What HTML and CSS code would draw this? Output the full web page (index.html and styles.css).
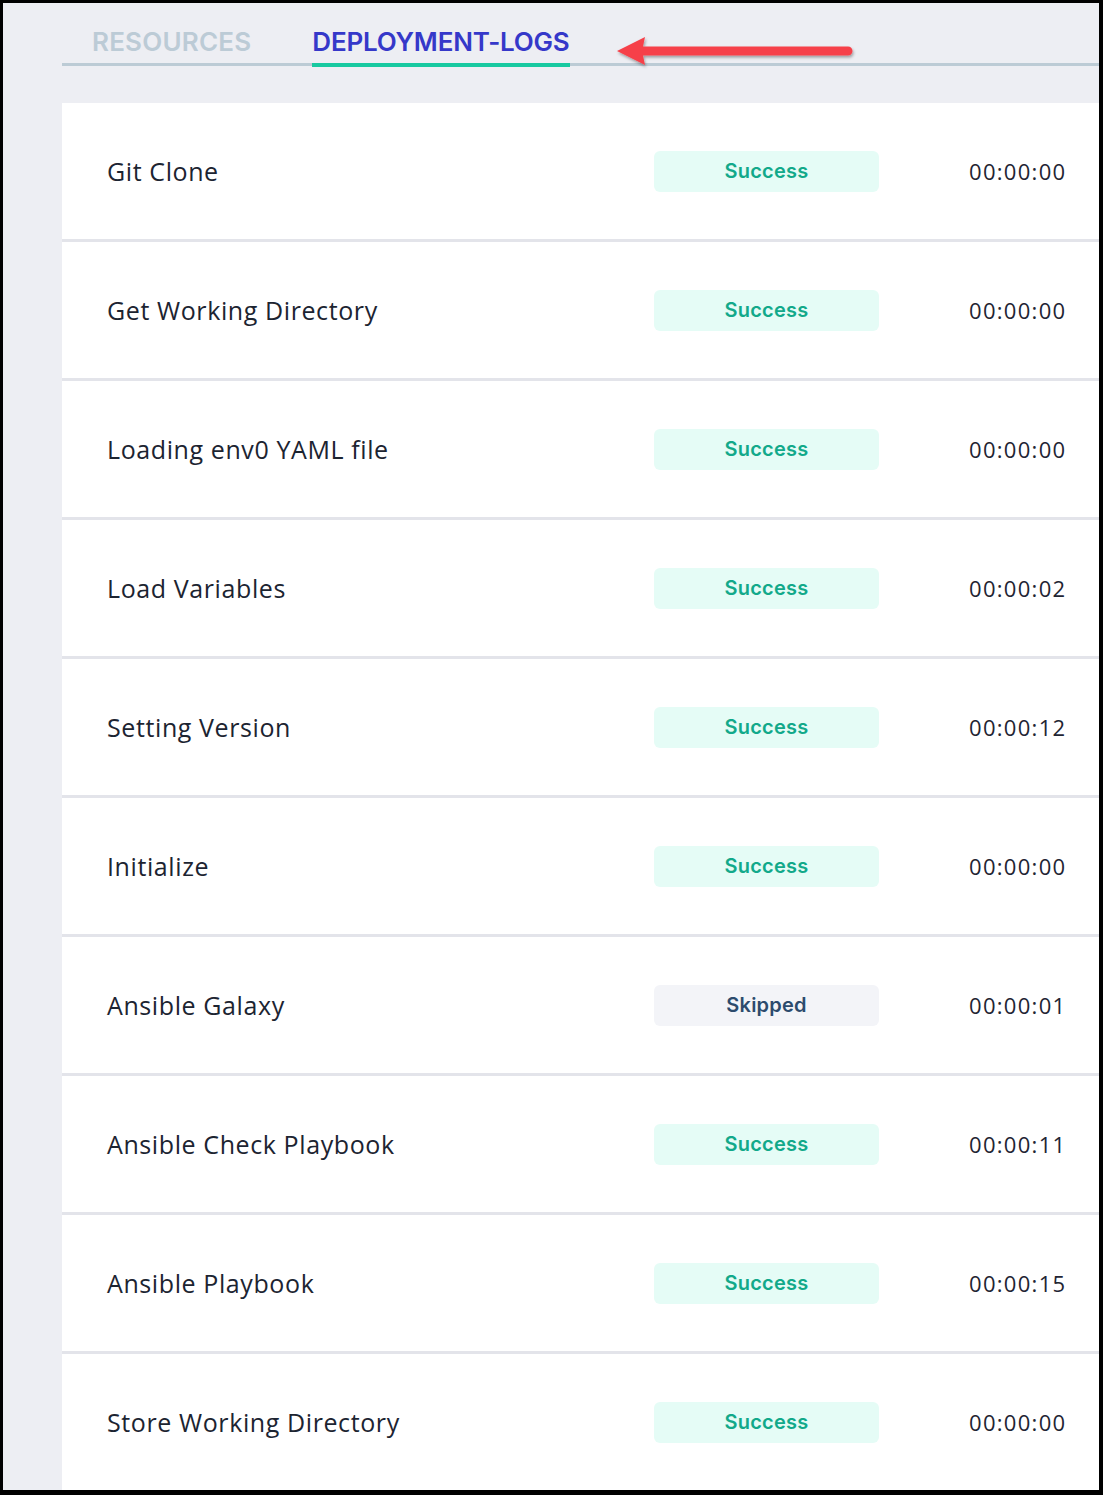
FILE: index.html
```html
<!DOCTYPE html>
<html>
<head>
<meta charset="utf-8">
<link rel="stylesheet" href="styles.css">
</head>
<body>
<div class="frame">
  <div class="tabbar">
    <div class="tab">RESOURCES</div>
    <div class="tab active">DEPLOYMENT-LOGS</div>
    <svg class="arrow" width="250" height="44" viewBox="0 0 250 44">
      <defs>
        <filter id="sh" x="-10%" y="-50%" width="120%" height="200%">
          <feDropShadow dx="1" dy="2" stdDeviation="1.5" flood-color="#000" flood-opacity="0.35"/>
        </filter>
      </defs>
      <g filter="url(#sh)" fill="#f6414a">
        <path d="M5 21 L33 7 L31 16.5 L236 16.5 A4.5 4.5 0 0 1 236 25.5 L31 25.5 L33 35 Z"/>
      </g>
    </svg>
  </div>
  <div class="list">
    <div class="row"><div class="name">Git Clone</div><div class="badge ok">Success</div><div class="time">00:00:00</div></div>
    <div class="row"><div class="name">Get Working Directory</div><div class="badge ok">Success</div><div class="time">00:00:00</div></div>
    <div class="row"><div class="name">Loading env0 YAML file</div><div class="badge ok">Success</div><div class="time">00:00:00</div></div>
    <div class="row"><div class="name">Load Variables</div><div class="badge ok">Success</div><div class="time">00:00:02</div></div>
    <div class="row"><div class="name">Setting Version</div><div class="badge ok">Success</div><div class="time">00:00:12</div></div>
    <div class="row"><div class="name">Initialize</div><div class="badge ok">Success</div><div class="time">00:00:00</div></div>
    <div class="row"><div class="name">Ansible Galaxy</div><div class="badge skip">Skipped</div><div class="time">00:00:01</div></div>
    <div class="row"><div class="name">Ansible Check Playbook</div><div class="badge ok">Success</div><div class="time">00:00:11</div></div>
    <div class="row"><div class="name">Ansible Playbook</div><div class="badge ok">Success</div><div class="time">00:00:15</div></div>
    <div class="row"><div class="name">Store Working Directory</div><div class="badge ok">Success</div><div class="time">00:00:00</div></div>
  </div>
</div>
</body>
</html>
```
FILE: styles.css
```css
html, body {
  margin: 0;
  padding: 0;
}
body {
  font-family: "Open Sans", "Liberation Sans", sans-serif;
}
.frame {
  box-sizing: border-box;
  width: 1103px;
  height: 1495px;
  border: 3px solid #000;
  border-right-width: 4px;
  border-bottom-width: 5px;
  background: #edeef3;
  overflow: hidden;
  padding-left: 59px;
  padding-top: 24px;
}
.tabbar {
  position: relative;
  display: flex;
  gap: 61px;
  padding-left: 30px;
  border-bottom: 3px solid #bccbd5;
  height: 36px;
}
.tab {
  font-family: "Inter", sans-serif;
  font-size: 26px;
  font-weight: 600;
  letter-spacing: -0.2px;
  color: #bccbd6;
  line-height: 30px;
  height: 36px;
  box-sizing: border-box;
}
.tab:first-child {
  letter-spacing: 0.2px;
}
.tab.active {
  color: #3538c9;
  border-bottom: 4px solid #17c9a0;
  height: 40px;
  margin-bottom: -1px;
}
.arrow {
  position: absolute;
  left: 550px;
  top: 3px;
}
.list {
  margin-top: 37px;
}
.row {
  display: grid;
  grid-template-columns: 592px 225px 1fr;
  align-items: center;
  height: 136px;
  background: #fff;
  border-bottom: 3px solid #e3e4ea;
}
.name {
  padding-left: 45px;
  font-size: 25px;
  letter-spacing: 0.6px;
  color: #1c2431;
}
.badge {
  height: 41px;
  border-radius: 6px;
  display: flex;
  align-items: center;
  justify-content: center;
  font-family: "Inter", sans-serif;
  font-size: 20px;
  font-weight: 600;
  letter-spacing: 0.2px;
}
.badge.ok {
  background: #e5fcf6;
  color: #12a98a;
}
.badge.skip {
  background: #f3f4f8;
  color: #2c4b6d;
}
.time {
  padding-left: 90px;
  font-size: 22px;
  letter-spacing: 1.3px;
  color: #1f2533;
}
```
